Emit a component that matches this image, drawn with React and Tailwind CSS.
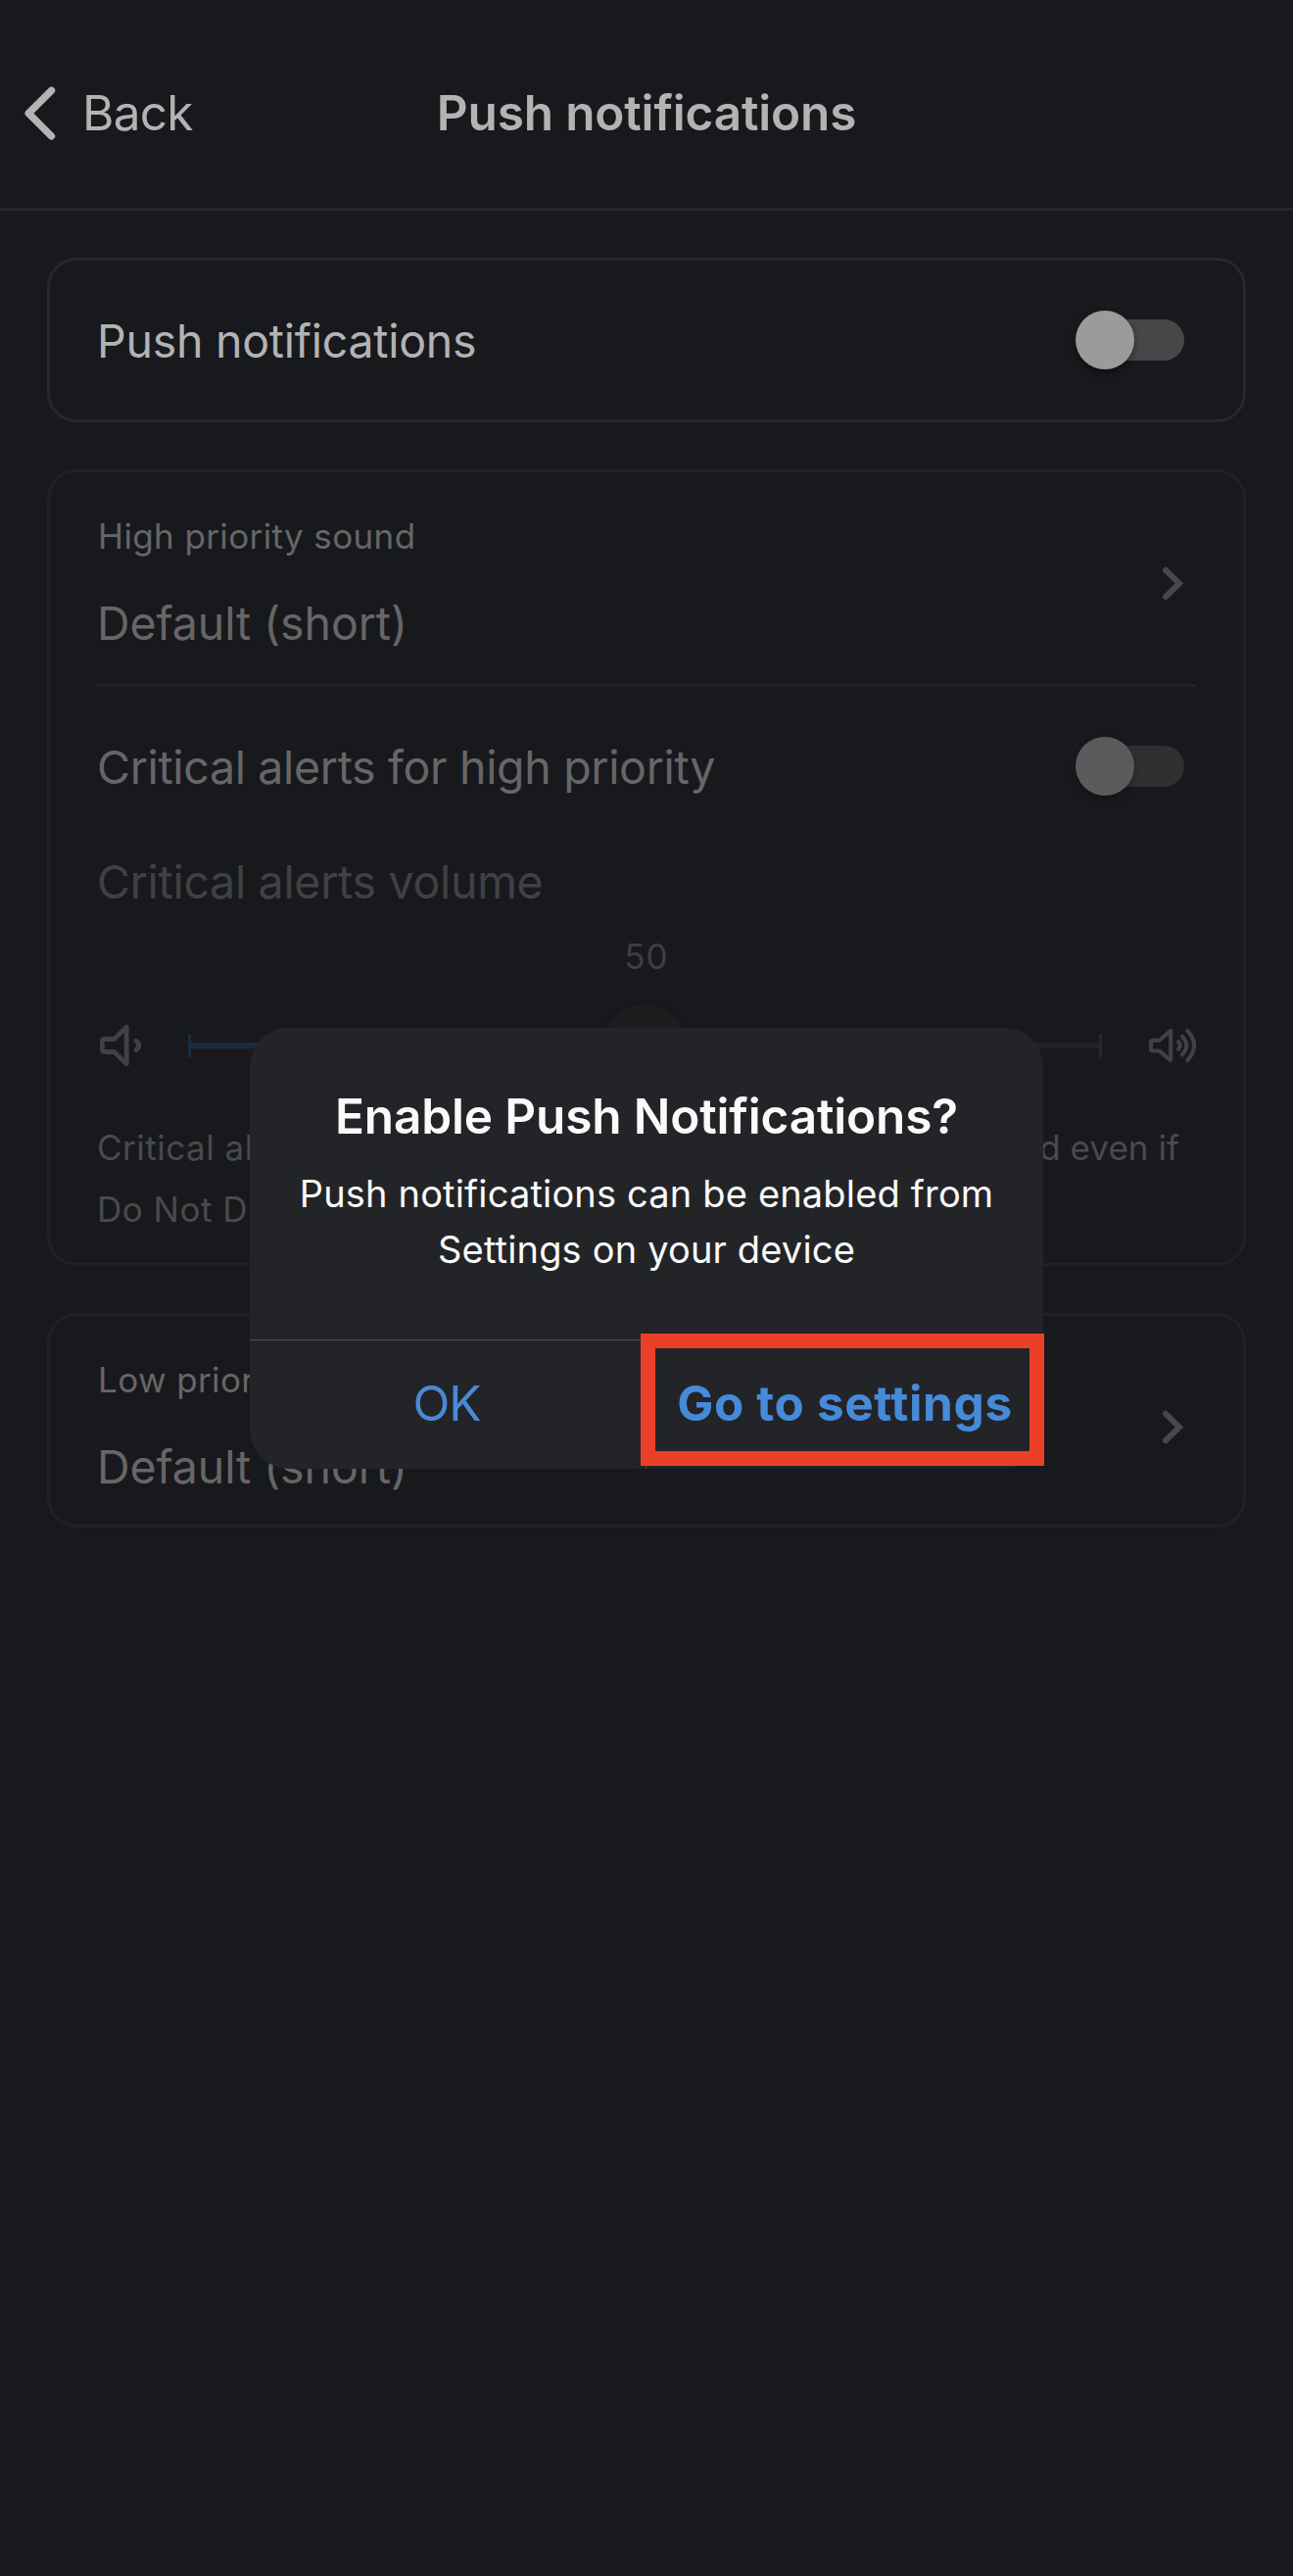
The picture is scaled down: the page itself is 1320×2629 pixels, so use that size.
function BackChevron() {
  return (
    <svg className="h-14 w-8 shrink-0" viewBox="0 0 32 56" fill="none" stroke="#b3b3b4" strokeWidth="7.4" strokeLinecap="round" strokeLinejoin="round">
      <path d="M27.5 5.4L4.2 28.7L27.5 52" />
    </svg>
  );
}

function RowChevron() {
  return (
    <svg className="mr-[13px] h-[35px] w-[22px] shrink-0" viewBox="0 0 22 35" fill="none" stroke="#47484a" strokeWidth="6" strokeLinecap="round">
      <path d="M4 3.8L18 17.5L4 31.2" />
    </svg>
  );
}

function VolumeLow() {
  return (
    <svg className="size-12 shrink-0" viewBox="0 0 48 48" fill="none" stroke="#404143" strokeWidth="4.8" strokeLinecap="round" strokeLinejoin="round">
      <path d="M8 17.5H17.5L30.2 5.3V42.7L17.5 30.5H8Q5.4 30.5 5.4 28V20Q5.4 17.5 8 17.5Z" />
      <path d="M40 19.3Q45.6 24 40 28.7" />
    </svg>
  );
}

function VolumeHigh() {
  return (
    <svg className="size-12 shrink-0" viewBox="0 0 48 48" fill="none" stroke="#404143" strokeWidth="4" strokeLinecap="round" strokeLinejoin="round">
      <path d="M4 18.8H10.5L22.2 8.9V39.1L10.5 29.6H4Q2 29.6 2 27.5V21Q2 18.8 4 18.8Z" />
      <path d="M30 20.2Q33.4 24 30 27.8" />
      <path d="M34 14.6Q42.6 24 34 33.4" />
      <path d="M39.2 8.9Q53 24 39.2 39.1" />
    </svg>
  );
}

function Toggle({ dim }) {
  return (
    <div className="relative mr-3 flex h-[60px] w-[111px] shrink-0 items-center justify-end">
      <div className={`h-[42px] w-[105px] rounded-full ${dim ? "bg-[#2f3032]" : "bg-[#474749]"}`} />
      <div className={`absolute left-0 top-0 size-[60px] rounded-full ${dim ? "bg-[#5b5b5d] shadow-[0_3px_6px_rgba(0,0,0,0.25)]" : "bg-[#9b9b9b] shadow-[0_3px_6px_rgba(0,0,0,0.45)]"}`} />
    </div>
  );
}

function SoundRow({ label, value }) {
  return (
    <div className="flex items-center justify-between pt-[38px] text-[#666668]">
      <div className="flex flex-col gap-[27px]">
        <div className="pl-px text-[35px] leading-[54px] tracking-[0.38px]">{label}</div>
        <div className="text-[46.5px] leading-[70px] tracking-[-0.1px]">{value}</div>
      </div>
      <RowChevron />
    </div>
  );
}

function VolumeSlider() {
  return (
    <div className="mt-[22px] flex h-[84px] items-center">
      <VolumeLow />
      <div className="relative ml-[45px] mr-12 flex flex-1 items-center">
        <div className="h-6 w-[3px] bg-[#1c2c3b]" />
        <div className="h-1.5 flex-1 bg-[#1c2c3b]" />
        <div className="h-1.5 flex-1 bg-[#212224]" />
        <div className="h-6 w-[3px] bg-[#262729]" />
        <div className="absolute left-1/2 top-1/2 size-[84px] -translate-x-1/2 -translate-y-1/2 rounded-full bg-[#1c1d1f] shadow-[0_2px_6px_rgba(0,0,0,0.15)]" />
      </div>
      <VolumeHigh />
    </div>
  );
}

function Dialog() {
  return (
    <div className="absolute left-[255px] top-[1049px] flex h-[450px] w-[810px] flex-col rounded-[40px] bg-[#232428] text-center text-[#fafafa]">
      <h2 className="mt-[60px] text-[49.5px] font-semibold leading-[60px] tracking-[-0.14px]">Enable Push Notifications?</h2>
      <p className="mt-[21px] text-[38px] leading-[57px] tracking-[0.17px]">
        Push notifications can be enabled from
        <br />
        Settings on your device
      </p>
      <div className="mt-auto flex h-[132px] border-t border-[#4f5053] text-[49.5px]">
        <button className="w-[404px] pb-0.5 pr-0.5 tracking-[-1px] text-[#4a8ad3]">OK</button>
        <div className="w-px bg-[#4f5053]" />
        <button className="flex-1 pb-0.5 font-bold tracking-[0.62px] text-[#468ada]">Go to settings</button>
      </div>
      <div className="absolute left-[399px] top-[312px] h-[135px] w-[412px] border-[15px] border-[#ea4027]" />
    </div>
  );
}

export default function App() {
  return (
    <div className="relative h-[2629px] w-[1320px] overflow-hidden bg-[#18191c] font-[Inter,sans-serif]">
      <header className="h-[215px] border-b-[3px] border-[#27282b] pt-[79px] text-[49.5px] leading-[72px] text-[#b3b3b4]">
        <div className="grid grid-cols-[1fr_auto_1fr] items-center">
          <div className="flex items-center gap-[27px] pl-[25px] tracking-[-0.7px]">
            <BackChevron />
            <span>Back</span>
          </div>
          <h1 className="font-semibold tracking-[-0.16px]">Push notifications</h1>
        </div>
      </header>

      <main className="flex flex-col gap-12 px-12 pt-12">
        <section className="flex h-[168px] items-center justify-between rounded-[30px] border-[3px] border-[#27282b] px-12">
          <span className="pt-[3px] text-[46.5px] tracking-[-0.27px] text-[#b3b3b4]">Push notifications</span>
          <Toggle />
        </section>

        <section className="h-[813px] rounded-[30px] border-[3px] border-[#202124] px-12">
          <SoundRow label="High priority sound" value="Default (short)" />
          <div className="mt-[27px] h-[3px] bg-[#222326]" />
          <div className="mt-[31px] flex h-[100px] items-center justify-between">
            <span className="pt-[3px] text-[46.5px] tracking-[-0.34px] text-[#666668]">Critical alerts for high priority</span>
            <Toggle dim />
          </div>
          <div className="mt-[33px] text-[46.5px] leading-[70px] tracking-[-0.31px] text-[#404143]">Critical alerts volume</div>
          <div className="mt-[14px] text-center text-[35px] leading-[54px] tracking-[1px] text-[#3e3f41]">50</div>
          <VolumeSlider />
          <div className="mt-[31px] text-[35px] leading-[63px] tracking-[0.5px] text-[#4a4a4d]">
            <div className="flex justify-between pr-[17px]">
              <span>Critical alerts</span>
              <span className="tracking-[0.05px]">played even if</span>
            </div>
            <div>Do Not Disturb</div>
          </div>
        </section>

        <section className="h-[219px] rounded-[30px] border-[3px] border-[#202124] px-12">
          <SoundRow label="Low priority sound" value="Default (short)" />
        </section>
      </main>

      <Dialog />
    </div>
  );
}
